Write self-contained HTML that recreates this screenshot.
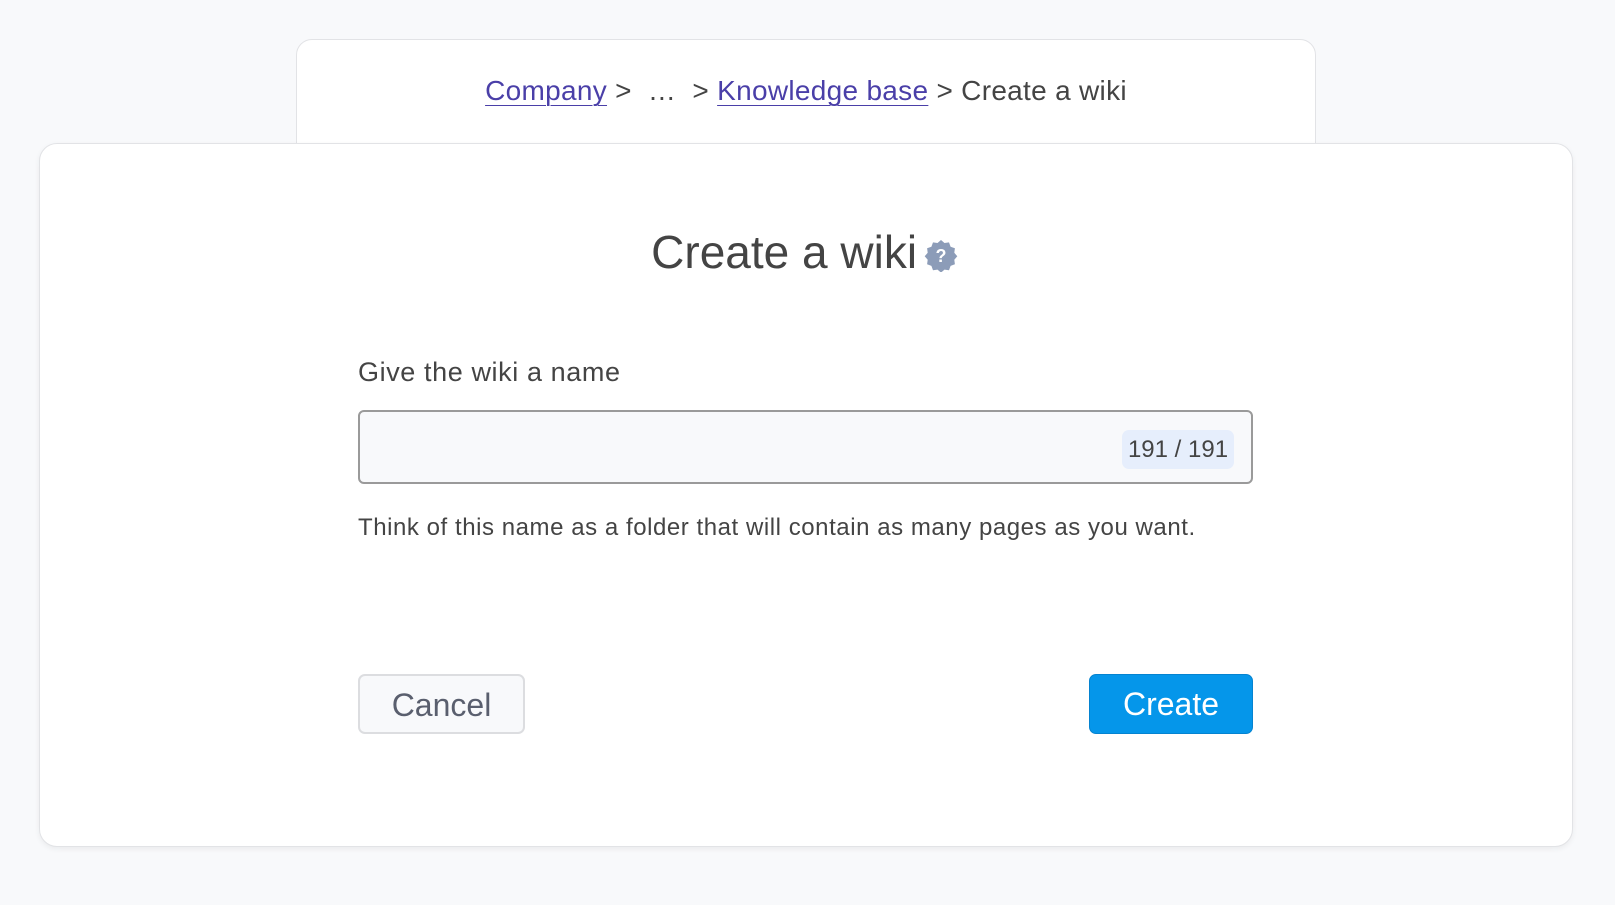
<!DOCTYPE html>
<html><head><style>
*{box-sizing:border-box;margin:0;padding:0}
body{width:1615px;height:905px;background:#f8f9fb;font-family:"Liberation Sans",sans-serif;position:relative;overflow:hidden;color:#444}
.top{position:absolute;left:296px;top:39px;width:1020px;height:140px;background:#fff;border:1px solid #e2e3e6;border-radius:16px}
.bc{position:absolute;left:0;right:0;top:35px;text-align:center;font-size:28px;color:#444;white-space:nowrap;letter-spacing:0.3px}
.bc a{color:#4a3fa8;text-decoration:underline;text-underline-offset:5px;text-decoration-thickness:1px}
.card{position:absolute;left:39px;top:143px;width:1534px;height:704px;background:#fff;border:1px solid #e2e3e6;border-radius:18px;box-shadow:0 2px 6px rgba(0,0,0,.06)}
h1{position:absolute;left:0;right:0;top:225px;text-align:center;font-weight:normal;font-size:46px;color:#444;padding-right:6px}
.lbl{position:absolute;left:358px;top:357px;font-size:27px;color:#444;letter-spacing:0.6px}
.inp{position:absolute;left:358px;top:410px;width:895px;height:74px;background:#f8f9fb;border:2px solid #9a9a9a;border-radius:6px}
.cnt{position:absolute;left:1122px;top:430px;width:112px;height:39px;background:#e6eefc;border-radius:7px;font-size:24px;line-height:39px;text-align:center;color:#444}
.help{position:absolute;left:358px;top:514px;font-size:24px;color:#444;letter-spacing:0.55px;white-space:nowrap}
.btn{position:absolute;top:674px;height:60px;border-radius:7px;font-size:32px;line-height:58px;text-align:center}
.cancel{left:358px;width:167px;background:#f8f9fb;border:2px solid #dcdde0;color:#5a5f6e}
.create{left:1089px;width:164px;background:#0596ea;border:1px solid #0583d0;color:#fff}
</style></head><body>
<div class="top"><div class="bc"><a>Company</a> &gt; &nbsp;… &nbsp;&gt; <a>Knowledge base</a> &gt; Create a wiki</div></div>
<div class="card"></div>
<h1>Create a wiki <svg width="34" height="34" viewBox="0 0 34 34" style="vertical-align:-4px;margin-left:-6px"><path d="M17 2l3.5 3 4.5-.6 1.6 4.3 4.3 1.6-.6 4.5 3 3.5-3 3.5.6 4.5-4.3 1.6-1.6 4.3-4.5-.6-3.5 3-3.5-3-4.5.6-1.6-4.3-4.3-1.6.6-4.5-3-3.5 3-3.5-.6-4.5 4.3-1.6 1.6-4.3 4.5.6z" fill="#8c9cb8"/><text x="17" y="24" font-size="18" font-weight="bold" text-anchor="middle" fill="#fff" font-family="Liberation Sans">?</text></svg></h1>
<div class="lbl">Give the wiki a name</div>
<div class="inp"></div>
<div class="cnt">191 / 191</div>
<div class="help">Think of this name as a folder that will contain as many pages as you want.</div>
<div class="btn cancel">Cancel</div>
<div class="btn create">Create</div>
</body></html>
